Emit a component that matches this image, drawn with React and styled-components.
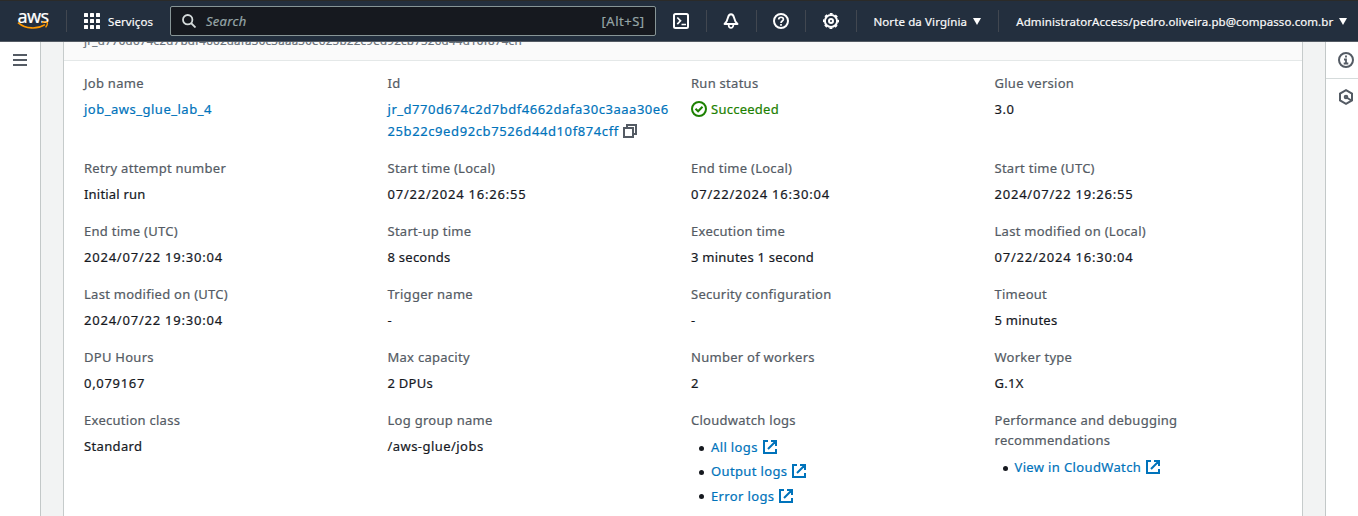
import React from 'react';
import styled, { createGlobalStyle } from 'styled-components';

const GlobalStyle = createGlobalStyle`
  * { box-sizing: border-box; }
  html, body { margin: 0; height: 516px; overflow: hidden; }
  body { font-family: 'Noto Sans', sans-serif; font-size: 13px; color: #16191f; background: #f2f3f3; -webkit-text-stroke: 0.2px; }
  svg { display: block; flex: none; }
`;

const Page = styled.div`
  width: 1358px;
  height: 516px;
  display: flex;
  flex-direction: column;
  overflow: hidden;
`;
const TopBar = styled.header`
  height: 42px;
  flex: none;
  display: flex;
  align-items: center;
  background: #232f3e;
  color: #fafafa;
  border-top: 1px solid #2b2b29;
  border-bottom: 1px solid #545b64;
  font-size: 11.5px;
  white-space: nowrap;
  z-index: 1;
`;
const Logo = styled.div`
  width: 66px;
  padding-left: 17px;
`;
const Divider = styled.i`
  width: 1px;
  height: 22px;
  background: #414750;
`;
const Services = styled.div`
  width: 103px;
  padding-left: 17px;
  display: flex;
  align-items: center;
  gap: 8px;
  letter-spacing: 0.1px;
`;
const SearchBox = styled.div`
  width: 486px;
  height: 30px;
  border: 1px solid #879596;
  border-radius: 2px;
  background: #16191f;
  color: #95a5a6;
  display: flex;
  align-items: center;
  padding: 0 10px 0 11px;
  font-size: 13px;
  em { flex: 1; padding-left: 10px; letter-spacing: 0.3px; }
  span { letter-spacing: 0.5px; }
`;
const IconCell = styled.div`
  width: ${(p) => p.$w}px;
  display: flex;
  justify-content: center;
`;
const Menu = styled.div`
  width: ${(p) => p.$w}px;
  padding-left: ${(p) => p.$pad}px;
  display: flex;
  align-items: center;
  gap: 6px;
  letter-spacing: ${(p) => p.$ls}px;
`;
const Body = styled.div`
  flex: 1;
  min-height: 0;
  display: flex;
`;
const LeftRail = styled.nav`
  width: 41px;
  background: #fff;
  border-right: 1px solid #c3c8c8;
  padding: 12px 0 0 13px;
`;
const Main = styled.main`
  flex: 1;
  padding: 0 22px;
  background: #f2f3f3;
`;
const Card = styled.section`
  height: 474px;
  background: #fff;
  border: solid #c6cbcb;
  border-width: 0 1px;
`;
const CardHeader = styled.div`
  height: 19px;
  background: #fafafa;
  border-bottom: 1px solid #e4e8e8;
  display: flow-root;
  padding-left: 20px;
`;
const RunId = styled.div`
  margin-top: -10px;
  line-height: 18px;
  font-size: 11.5px;
  letter-spacing: 0.28px;
  color: #687078;
`;
const Details = styled.div`
  display: grid;
  grid-template-columns: repeat(4, 283.5px);
  column-gap: 20px;
  row-gap: 16px;
  padding: 12px 0 0 20px;
`;
const Label = styled.div`
  line-height: 20px;
  margin-bottom: 5px;
  color: #545b64;
  letter-spacing: 0.27px;
`;
const Value = styled.div`
  line-height: 22px;
  letter-spacing: ${(p) => p.$ls ?? 0.25}px;
  white-space: nowrap;
`;
const Link = styled.a`
  color: #0073bb;
`;
const IdLine = styled.div`
  display: flex;
  align-items: center;
  gap: 4px;
  letter-spacing: 0.6px;
`;
const Status = styled.div`
  display: flex;
  align-items: center;
  gap: 4px;
  color: #1d8102;
`;
const LinkList = styled.ul`
  list-style: none;
  margin: 0;
  padding: 0 0 0 8px;
`;
const LinkItem = styled.li`
  height: 24.3px;
  display: flex;
  align-items: center;
  letter-spacing: 0.36px;
  &::before {
    content: '';
    width: 5px;
    height: 5px;
    border-radius: 50%;
    background: #16191f;
    margin: 2px 7px 0 0;
  }
  svg { margin-left: 5px; }
`;
const RightRail = styled.aside`
  width: 33px;
  background: #fff;
  border-left: 1px solid #c3c8c8;
`;
const Tool = styled.div`
  height: 37px;
  display: flex;
  align-items: center;
  padding-left: 12px;
  &:first-child { border-bottom: 1px solid #d5dbdb; }
  &:last-child { height: 36px; }
`;

const AwsMark = styled.div`
  width: 32px;
  line-height: 18px;
  font-size: 18px;
  letter-spacing: -0.6px;
  color: #fff;
  text-align: center;
  height: 14px;
  margin-top: -6px;
`;

const AwsLogo = () => (
  <Logo>
    <AwsMark>aws</AwsMark>
    <svg width="32" height="9" viewBox="0 0 32 9" fill="none" stroke="#f90" strokeWidth="1.7">
      <path d="M1 1.600C9 8.300 20 8.500 28 3.600" />
      <path d="M25 1.500c2.200-.7 4.400-.7 5.200.1.500 1-.3 3.200-1.600 4.800" strokeWidth="1.4" />
    </svg>
  </Logo>
);
const Grid = () => (
  <svg width="16" height="16" fill="#fff">
    {[0, 6, 12].map((y) => [0, 6, 12].map((x) => <rect key={`${x}-${y}`} x={x} y={y} width="4" height="4" rx=".5" />))}
  </svg>
);
const Caret = () => (
  <svg width="8" height="7"><path d="M0 0h8L4 7z" fill="#fff" /></svg>
);
const Stroke = ({ size = 16, color = '#fff', children }) => (
  <svg width={size} height={size} viewBox="0 0 16 16" fill="none" stroke={color} strokeWidth="2">{children}</svg>
);
const External = () => (
  <svg width="14" height="14" viewBox="0 0 14 14" fill="none" stroke="#0073bb" strokeWidth="2">
    <path d="M5 1H1v12h12V9M8 1h5v5M13 1 5 9" />
  </svg>
);
const Copy = () => (
  <svg width="14" height="14" viewBox="0 0 14 14" fill="none" stroke="#545b64" strokeWidth="2">
    <path d="M1 4h9v9H1zM4 4V1h9v9h-3" />
  </svg>
);

const NUMERIC = 0.78;
const rows = [
  ['Retry attempt number', 'Initial run', 0.2],
  ['Start time (Local)', '07/22/2024 16:26:55', NUMERIC],
  ['End time (Local)', '07/22/2024 16:30:04', NUMERIC],
  ['Start time (UTC)', '2024/07/22 19:26:55', NUMERIC],
  ['End time (UTC)', '2024/07/22 19:30:04', NUMERIC],
  ['Start-up time', '8 seconds'],
  ['Execution time', '3 minutes 1 second'],
  ['Last modified on (Local)', '07/22/2024 16:30:04', NUMERIC],
  ['Last modified on (UTC)', '2024/07/22 19:30:04', NUMERIC],
  ['Trigger name', '-'],
  ['Security configuration', '-'],
  ['Timeout', '5 minutes'],
  ['DPU Hours', '0,079167', 0.7],
  ['Max capacity', '2 DPUs'],
  ['Number of workers', '2'],
  ['Worker type', 'G.1X'],
  ['Execution class', 'Standard', 0.35],
  ['Log group name', '/aws-glue/jobs', 0.45],
];

const Field = ({ label, ls, children }) => (
  <div>
    <Label>{label}</Label>
    <Value $ls={ls}>{children}</Value>
  </div>
);
const Links = ({ label, items }) => (
  <div>
    <Label>{label}</Label>
    <LinkList>
      {items.map((t) => <LinkItem key={t}><Link>{t}</Link><External /></LinkItem>)}
    </LinkList>
  </div>
);

export default function App() {
  return (
    <Page>
      <GlobalStyle />
      <TopBar>
        <AwsLogo />
        <Divider />
        <Services><Grid />Serviços</Services>
        <SearchBox>
          <svg width="14" height="14" viewBox="0 0 14 14" fill="none" stroke="#d5dbdb" strokeWidth="1.8">
            <circle cx="5.7" cy="5.7" r="4.7" /><path d="m9 9 4.5 4.5" />
          </svg>
          <em>Search</em>
          <span>[Alt+S]</span>
        </SearchBox>
        <IconCell $w={50}>
          <Stroke><rect x="1" y="1" width="14" height="14" rx="1.5" /><path d="m4.3 4.5 3.2 3.3-3.2 3.4M8.5 11.5H13" strokeWidth="1.7" /></Stroke>
        </IconCell>
        <Divider />
        <IconCell $w={50}>
          <Stroke><path d="M8 1.200c-1.700 0-2.600 1.500-3 3.300C4.400 7.300 3.500 9.300 1.500 11h13c-2-1.700-2.900-3.700-3.500-6.500-.4-1.800-1.300-3.300-3-3.300z" strokeWidth="1.9" strokeLinejoin="round" /><path d="M5.600 11.500c0 4.600 4.800 4.600 4.800 0" strokeWidth="1.700" /></Stroke>
        </IconCell>
        <Divider />
        <IconCell $w={48}>
          <Stroke><circle cx="8" cy="8" r="7" /><path d="M5.700 6.600c0-3.100 4.700-3 4.700-.3C10.400 8 8 8 8 9.900M8 11v1.700" strokeWidth="1.700" /></Stroke>
        </IconCell>
        <Divider />
        <IconCell $w={50}>
          <Stroke>
            <circle cx="8" cy="8" r="6.100" />
            <circle cx="8" cy="8" r="7.300" strokeWidth="1.500" strokeDasharray="2.867 2.867" strokeDashoffset="1.430" />
            <circle cx="8" cy="8" r="2" />
          </Stroke>
        </IconCell>
        <Divider />
        <Menu $w={141} $pad={16} $ls={0.12}>Norte da Virgínia<Caret /></Menu>
        <Divider />
        <Menu $w={359} $pad={17} $ls={0.08}>AdministratorAccess/pedro.oliveira.pb@compasso.com.br<Caret /></Menu>
      </TopBar>
      <Body>
        <LeftRail>
          <svg width="14" height="12" fill="#545b64"><path d="M0 0h14v2H0zM0 5h14v2H0zM0 10h14v2H0z" /></svg>
        </LeftRail>
        <Main>
          <Card>
            <CardHeader><RunId>jr_d770d674c2d7bdf4662dafa30c3aaa30e625b22c9ed92cb7526d44d10f874cff</RunId></CardHeader>
            <Details>
              <Field label="Job name" ls={0.5}><Link>job_aws_glue_lab_4</Link></Field>
              <Field label="Id" ls={0.53}>
                <Link>jr_d770d674c2d7bdf4662dafa30c3aaa30e6</Link>
                <IdLine><Link>25b22c9ed92cb7526d44d10f874cff</Link><Copy /></IdLine>
              </Field>
              <Field label="Run status">
                <Status>
                  <Stroke color="#1d8102"><circle cx="8" cy="8" r="7" /><path d="m4.500 7.800 2.600 2.500 4.400-4.500" /></Stroke>
                  Succeeded
                </Status>
              </Field>
              <Field label="Glue version" ls={0.5}>3.0</Field>
              {rows.map(([label, value, ls]) => <Field key={label} label={label} ls={ls}>{value}</Field>)}
              <Links label="Cloudwatch logs" items={['All logs', 'Output logs', 'Error logs']} />
              <Links label="Performance and debugging recommendations" items={['View in CloudWatch']} />
            </Details>
          </Card>
        </Main>
        <RightRail>
          <Tool>
            <Stroke color="#545b64"><circle cx="8" cy="8" r="7" /><path d="M8 3.500v2M6 7.500h2V12M5.700 11.500h4.600" strokeWidth="1.800" /></Stroke>
          </Tool>
          <Tool>
            <Stroke color="#545b64"><path d="M8 1.200 14 4.600v6.800L8 14.800 2 11.400V4.600z" /><circle cx="8" cy="8" r="1.300" /><path d="m8.500 8.500 5 3" /></Stroke>
          </Tool>
        </RightRail>
      </Body>
    </Page>
  );
}
